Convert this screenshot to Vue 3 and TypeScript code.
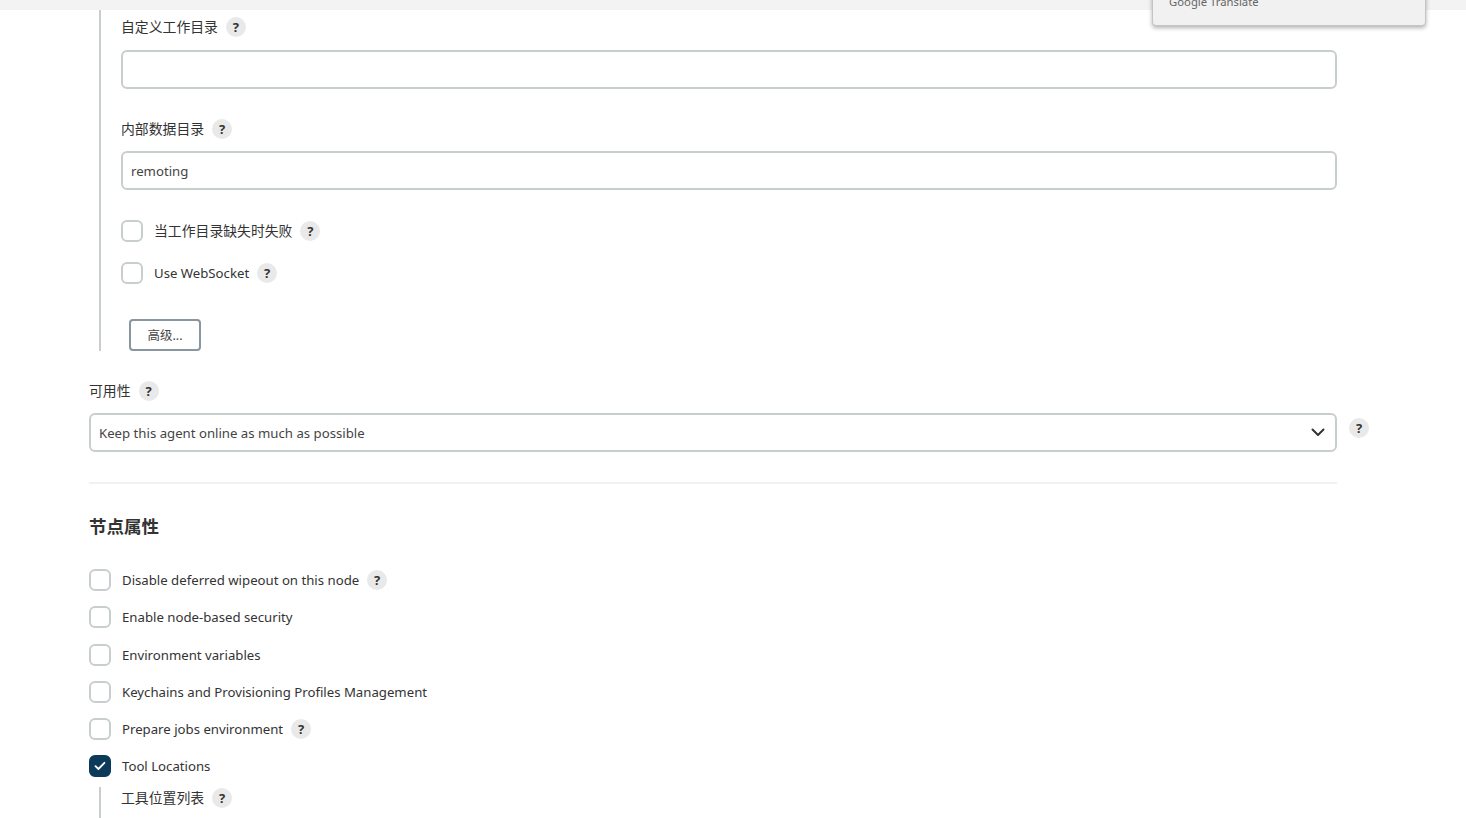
<script setup lang="ts">
interface Prop { label: string; help: boolean; checked?: boolean }
const props: Prop[] = [
  { label: 'Disable deferred wipeout on this node', help: true },
  { label: 'Enable node-based security', help: false },
  { label: 'Environment variables', help: false },
  { label: 'Keychains and Provisioning Profiles Management', help: false },
  { label: 'Prepare jobs environment', help: true },
  { label: 'Tool Locations', help: false, checked: true },
]
</script>

<template>
  <div class="page">
    <div class="topbar"></div>
    <div class="popup"><span class="popup-text">Google Translate</span></div>
    <main class="form">
      <section class="nested first">
        <div class="label-row"><span class="cjk">自定义工作目录</span><span class="help">?</span></div>
        <input class="field" type="text" />
        <div class="label-row second"><span class="cjk">内部数据目录</span><span class="help">?</span></div>
        <input class="field tight" type="text" value="remoting" />
        <div class="check-row c1"><span class="box"></span><span class="check-label cjk">当工作目录缺失时失败</span><span class="help">?</span></div>
        <div class="check-row c2"><span class="box"></span><span class="check-label">Use WebSocket</span><span class="help">?</span></div>
        <button class="advanced" type="button">高级...</button>
      </section>

      <div class="label-row avail"><span class="cjk">可用性</span><span class="help">?</span></div>
      <div class="select-row">
        <div class="select">
          <span>Keep this agent online as much as possible</span>
          <svg class="chevron" width="14" height="9" viewBox="0 0 14 9"><path d="M1.5 1.5 7 7l5.5-5.5" fill="none" stroke="#333" stroke-width="2" stroke-linecap="round" stroke-linejoin="round" /></svg>
        </div>
        <span class="help">?</span>
      </div>

      <hr class="rule" />
      <h2 class="heading">节点属性</h2>

      <div class="props">
        <div v-for="p in props" :key="p.label" class="prop-row">
          <span class="box" :class="{ on: p.checked }">
            <svg v-if="p.checked" width="12" height="10" viewBox="0 0 12 10"><path d="M1.5 5.2 4.4 8l6-6.2" fill="none" stroke="#fff" stroke-width="1.8" stroke-linecap="round" stroke-linejoin="round" /></svg>
          </span>
          <span class="check-label">{{ p.label }}</span>
          <span v-if="p.help" class="help">?</span>
        </div>
      </div>

      <section class="nested last">
        <div class="label-row"><span class="cjk">工具位置列表</span><span class="help">?</span></div>
      </section>
    </main>
  </div>
</template>

<style>
html, body { margin: 0; background: #fff; overflow: hidden; }
</style>

<style scoped>
.page {
  position: relative;
  height: 818px;
  overflow: hidden;
  background: #fff;
  color: #333;
  font-family: "Noto Sans", "Noto Sans CJK SC", sans-serif;
  font-size: 13.2px;
}
.cjk { font-size: 13.85px; }
.topbar { height: 10px; background: #f3f3f3; }
.popup {
  position: absolute;
  left: 1152px;
  top: -30px;
  width: 272px;
  height: 54px;
  box-sizing: content-box;
  background: #f1f1f1;
  border: 1px solid #c4c4c4;
  border-radius: 4px;
  box-shadow: 0 2px 4px rgba(0, 0, 0, .3);
}
.popup-text {
  position: absolute;
  left: 16px;
  top: 23px;
  font-size: 11.3px;
  line-height: 16px;
  color: #666;
}
.form { width: 1248px; margin-left: 89px; }
.nested {
  border-left: 2px solid #c8cecf;
  margin-left: 10px;
  padding-left: 20px;
  width: 1216px;
}
.nested.first { height: 341px; }
.nested.last { height: 31px; margin-top: 10px; }
.label-row {
  display: flex;
  align-items: center;
  gap: 8px;
  height: 20px;
  line-height: 20px;
}
.first > .label-row:first-child { padding-top: 7px; }
.last > .label-row { padding-top: 1px; }
.label-row.second { margin-top: 30px; }
.field {
  display: block;
  box-sizing: border-box;
  width: 1216px;
  height: 39px;
  margin-top: 13px;
  padding: 0 8px;
  border: 2px solid #c8cecf;
  border-radius: 6px;
  outline: none;
  background: #fff;
  color: #444;
  font: inherit;
}
.field.tight { margin-top: 12px; }
.help {
  flex: none;
  display: inline-flex;
  align-items: center;
  justify-content: center;
  width: 20px;
  height: 20px;
  border-radius: 50%;
  background: #e9e9e9;
  color: #333;
  font-size: 13px;
  font-weight: 700;
  line-height: 20px;
}
.check-row, .prop-row { display: flex; align-items: center; height: 22px; }
.check-row.c1 { margin-top: 30px; }
.check-row.c2 { margin-top: 20px; }
.box {
  flex: none;
  box-sizing: border-box;
  display: inline-flex;
  align-items: center;
  justify-content: center;
  width: 22px;
  height: 22px;
  border: 2px solid #c8cecf;
  border-radius: 6px;
  background: #fff;
}
.box.on { background: #0b3a5b; border-color: #0b3a5b; }
.check-label { margin-left: 11px; margin-right: 8px; line-height: 20px; }
.advanced {
  display: block;
  box-sizing: border-box;
  width: 72px;
  height: 32px;
  margin: 35px 0 0 8px;
  padding: 0 0 2px;
  border: 2px solid #8a969f;
  border-radius: 4px;
  background: #fff;
  color: #444;
  font: inherit;
  font-size: 12.5px;
}
.label-row.avail { margin-top: 30px; }
.select-row { display: flex; align-items: flex-start; gap: 12px; margin-top: 12px; width: 1300px; }
.select {
  flex: none;
  box-sizing: border-box;
  display: flex;
  align-items: center;
  justify-content: space-between;
  width: 1248px;
  height: 39px;
  padding: 0 10px 0 8px;
  border: 2px solid #c8cecf;
  border-radius: 6px;
  color: #444;
}
.select-row .help { margin-top: 5px; }
.rule { height: 2px; margin: 30px 0 0; border: 0; background: #f1f1f1; }
.heading {
  margin: 31px 0 0;
  height: 22px;
  font-size: 17.5px;
  font-weight: 700;
  line-height: 22px;
  color: #333;
}
.props { display: flex; flex-direction: column; gap: 15.2px; margin-top: 32.2px; }
</style>
